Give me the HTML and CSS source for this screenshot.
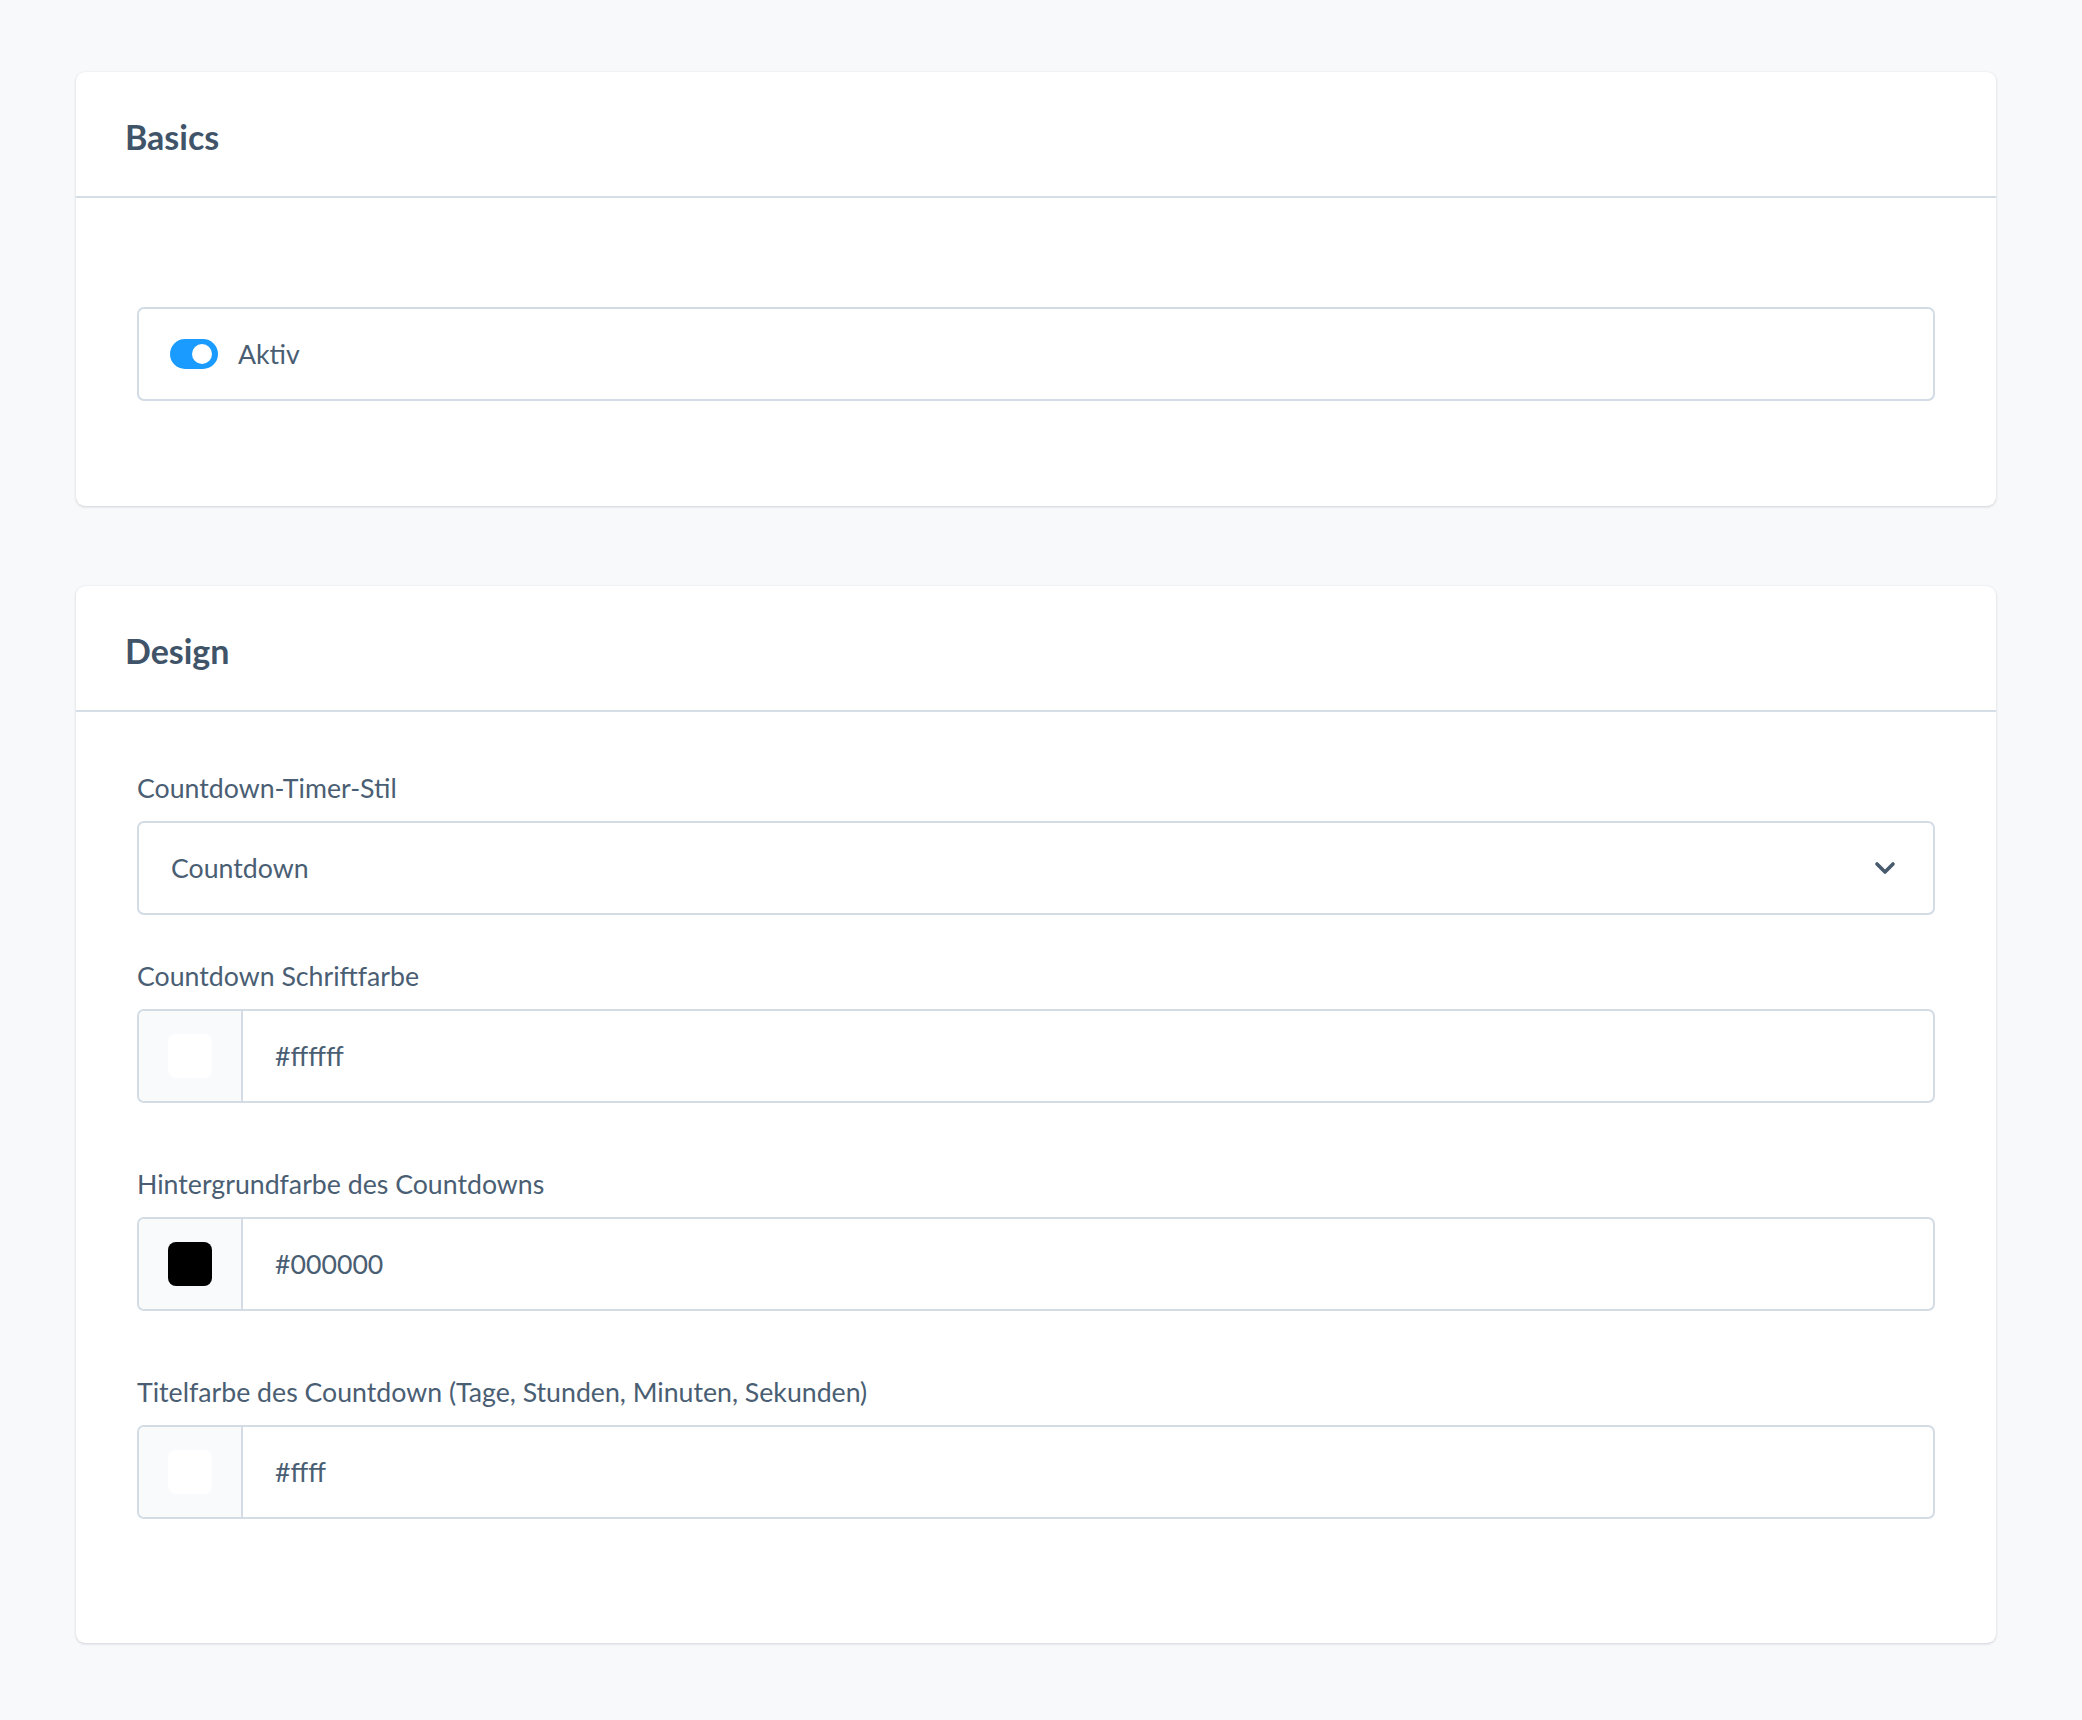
FILE: index.html
```html
<!DOCTYPE html>
<html lang="de">
<head>
<meta charset="utf-8">
<title>Countdown Einstellungen</title>
<link rel="stylesheet" href="styles.css">
</head>
<body>
<main class="page">
  <section class="card">
    <header class="card-header"><h2 class="card-title">Basics</h2></header>
    <div class="card-body card-body--basics">
      <div class="switch-box">
        <span class="switch"><span class="switch-knob"></span></span>
        <span class="switch-label">Aktiv</span>
      </div>
    </div>
  </section>

  <section class="card">
    <header class="card-header"><h2 class="card-title">Design</h2></header>
    <div class="card-body card-body--design">
      <div class="form-group">
        <label class="form-label">Countdown-Timer-Stil</label>
        <div class="control control--select">
          <span class="control-value">Countdown</span>
          <svg class="chevron" width="22" height="14" viewBox="0 0 22 14"><polyline points="3,3 11,11 19,3" fill="none" stroke="#475a6e" stroke-width="3.6" stroke-linecap="round" stroke-linejoin="round"/></svg>
        </div>
      </div>

      <div class="form-group form-group--color">
        <label class="form-label">Countdown Schriftfarbe</label>
        <div class="control control--color">
          <span class="color-addon"><span class="swatch swatch--white"></span></span>
          <span class="control-value control-value--color">#ffffff</span>
        </div>
      </div>

      <div class="form-group form-group--color">
        <label class="form-label">Hintergrundfarbe des Countdowns</label>
        <div class="control control--color">
          <span class="color-addon"><span class="swatch swatch--black"></span></span>
          <span class="control-value control-value--color">#000000</span>
        </div>
      </div>

      <div class="form-group form-group--color">
        <label class="form-label">Titelfarbe des Countdown (Tage, Stunden, Minuten, Sekunden)</label>
        <div class="control control--color">
          <span class="color-addon"><span class="swatch swatch--white"></span></span>
          <span class="control-value control-value--color">#ffff</span>
        </div>
      </div>
    </div>
  </section>
</main>
</body>
</html>
```

FILE: styles.css
```css
* { box-sizing: border-box; }

html, body {
  margin: 0;
  padding: 0;
}

body {
  background: #f7f9fb;
  font-family: Lato, "Open Sans", "Liberation Sans", sans-serif;
  color: #4a5e73;
}

.page {
  display: flex;
  flex-direction: column;
  gap: 80px;
  padding: 72px 86px 76px 76px;
}

.card {
  background: #ffffff;
  border-radius: 9px;
  box-shadow: 0 1px 3px rgba(20, 30, 45, 0.16), 0 0 1px rgba(20, 30, 45, 0.08);
}

.card-header {
  height: 126px;
  display: flex;
  align-items: center;
  padding: 7px 50px 0 49px;
  border-bottom: 2px solid #d5dee6;
}

.card-title {
  margin: 0;
  font-size: 34px;
  font-weight: 700;
  color: #3f5468;
  line-height: 1.2;
}

.card-body {
  padding: 0 61px;
}

.card-body--basics {
  padding-top: 109px;
  padding-bottom: 105px;
}

.card-body--design {
  padding-top: 58px;
  padding-bottom: 61px;
}

.switch-box {
  height: 94px;
  border: 2px solid #d3dce5;
  border-radius: 7px;
  display: flex;
  align-items: center;
  gap: 20px;
  padding-left: 31px;
}

.switch {
  width: 48px;
  height: 30px;
  border-radius: 15px;
  background: #1a9bff;
  display: flex;
  align-items: center;
  justify-content: flex-end;
  padding-right: 6px;
}

.switch-knob {
  width: 20px;
  height: 20px;
  border-radius: 50%;
  background: #ffffff;
}

.switch-label {
  font-size: 26.7px;
  line-height: 36px;
  color: #4a5e73;
}

.form-group {
  margin-bottom: 43px;
}

.form-group--color {
  margin-bottom: 63px;
}

.form-label {
  display: block;
  font-size: 26.7px;
  line-height: 36px;
  margin-bottom: 15px;
  color: #4a5e73;
}

.control {
  height: 94px;
  border: 2px solid #d3dce5;
  border-radius: 7px;
  display: flex;
  align-items: center;
  overflow: hidden;
}

.control--select {
  justify-content: space-between;
  padding: 0 37px 0 32px;
}

.control-value {
  font-size: 26.7px;
  line-height: 36px;
  color: #4a5e73;
}

.control-value--color {
  padding-left: 32px;
}

.chevron {
  display: block;
}

.color-addon {
  width: 104px;
  align-self: stretch;
  background: #f8fafc;
  border-right: 2px solid #d3dce5;
  display: flex;
  align-items: center;
  justify-content: center;
}

.swatch {
  width: 44px;
  height: 44px;
  border-radius: 8px;
}

.swatch--white { background: #ffffff; }
.swatch--black { background: #000000; }
```
